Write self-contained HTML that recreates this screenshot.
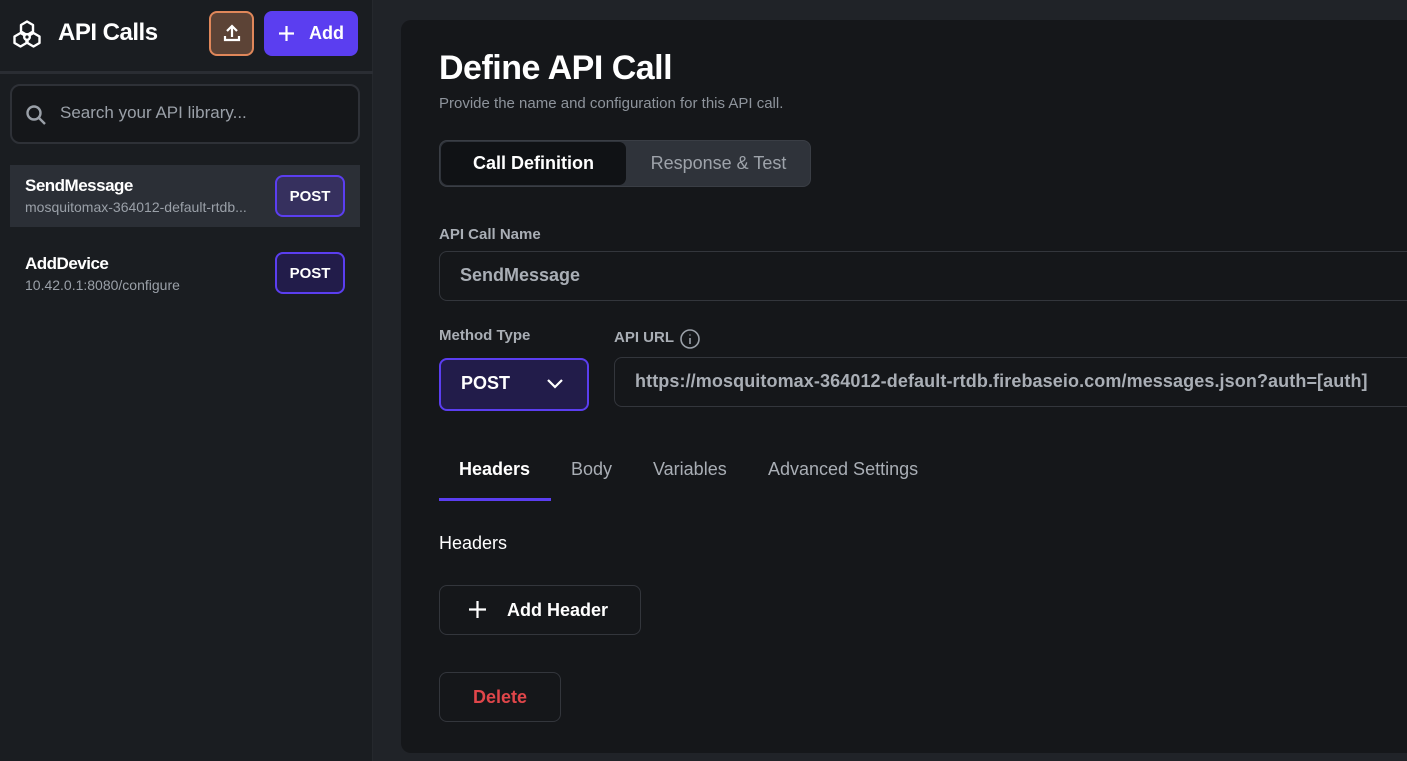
<!DOCTYPE html>
<html><head><meta charset="utf-8"><style>
*{margin:0;padding:0;box-sizing:border-box}
body{width:1407px;height:761px;overflow:hidden;background:#202328;font-family:"Liberation Sans",sans-serif;position:relative}
.a{position:absolute}
.side{left:0;top:0;width:373px;height:761px;background:#1a1d21;border-right:1px solid #25282d}
.panel{left:401px;top:20px;width:1020px;height:733px;background:#15171a;border-radius:10px}
.b{font-weight:bold}
.input{border:1px solid #33363c;border-radius:8px;background:#15171a}
</style></head><body>
<div class="a side">
  <svg class="a" style="left:11px;top:19px" width="32" height="32" viewBox="0 0 32 32" fill="none" stroke="#fff" stroke-width="2.4" stroke-linejoin="round">
    <path d="M16 2.5 L22 6 L22 12.5 L16 16 L10 12.5 L10 6 Z"/>
    <path d="M9.5 14 L15.5 17.5 L15.5 24 L9.5 27.5 L3.5 24 L3.5 17.5 Z"/>
    <path d="M22.5 14 L28.5 17.5 L28.5 24 L22.5 27.5 L16.5 24 L16.5 17.5 Z"/>
    <circle cx="16" cy="18" r="2.8" fill="#1a1d21"/>
  </svg>
  <div class="a b" style="left:58px;top:19px;font-size:24px;color:#fff;letter-spacing:-0.5px">API Calls</div>
  <div class="a" style="left:209px;top:11px;width:45px;height:45px;border:2px solid #e0875a;background:#5c4336;border-radius:8px">
    <svg class="a" style="left:11px;top:10px" width="20" height="20" viewBox="0 0 20 20" fill="none" stroke="#fff" stroke-width="2.2"><path d="M10 14V3M5 8l5-5 5 5M3 13v4h14v-4"/></svg>
  </div>
  <div class="a b" style="left:264px;top:11px;width:94px;height:45px;background:#5b3ef0;border-radius:8px;color:#fff;font-size:18px;line-height:45px">
    <svg class="a" style="left:13px;top:13px" width="19" height="19" viewBox="0 0 19 19" stroke="#fff" stroke-width="2.2"><path d="M9.5 2v15M2 9.5h15"/></svg>
    <span class="a" style="left:45px;top:0">Add</span></div>
  <div class="a" style="left:0;top:71px;width:373px;height:3px;background:#2a2d33"></div>
  <div class="a input" style="left:10px;top:84px;width:350px;height:60px;border-width:2px;border-color:#2e3137;border-radius:10px;background:#15171a">
    <svg class="a" style="left:12px;top:17px" width="24" height="24" viewBox="0 0 24 24" fill="none" stroke="#9aa0a8" stroke-width="2.4"><circle cx="10" cy="10" r="6.5"/><path d="M15 15l6 6"/></svg>
    <div class="a" style="left:48px;top:17px;font-size:17px;color:#9aa0a8">Search your API library...</div>
  </div>
  <div class="a" style="left:10px;top:165px;width:350px;height:62px;background:#2b2f36"></div>
  <div class="a b" style="left:25px;top:176px;font-size:17px;color:#fff;letter-spacing:-0.5px">SendMessage</div>
  <div class="a" style="left:25px;top:199px;font-size:14px;color:#9aa0a8">mosquitomax-364012-default-rtdb...</div>
  <div class="a b" style="left:275px;top:175px;width:70px;height:42px;border:2px solid #5b3ef0;background:#36305e;border-radius:8px;color:#fff;font-size:15px;text-align:center;line-height:40px">POST</div>
  <div class="a b" style="left:25px;top:254px;font-size:17px;color:#fff;letter-spacing:-0.5px">AddDevice</div>
  <div class="a" style="left:25px;top:277px;font-size:14px;color:#9aa0a8">10.42.0.1:8080/configure</div>
  <div class="a b" style="left:275px;top:252px;width:70px;height:42px;border:2px solid #5b3ef0;background:#221c4a;border-radius:8px;color:#fff;font-size:15px;text-align:center;line-height:40px">POST</div>
</div>
<div class="a panel"></div>
<div class="a b" style="left:439px;top:49px;font-size:34px;color:#fff;letter-spacing:-0.5px">Define API Call</div>
<div class="a" style="left:439px;top:95px;font-size:15px;color:#8e949c">Provide the name and configuration for this API call.</div>
<div class="a" style="left:439px;top:140px;width:372px;height:47px;background:#2f333a;border-radius:8px;border:1px solid #3a3e45"></div>
<div class="a b" style="left:441px;top:142px;width:185px;height:43px;background:#101215;border-radius:7px;color:#fff;font-size:18px;text-align:center;line-height:43px">Call Definition</div>
<div class="a" style="left:626px;top:142px;width:185px;height:43px;color:#9ea3aa;font-size:18px;text-align:center;line-height:43px">Response &amp; Test</div>
<div class="a b" style="left:439px;top:226px;font-size:15px;color:#a9aeb5">API Call Name</div>
<div class="a input" style="left:439px;top:251px;width:1000px;height:50px"></div>
<div class="a b" style="left:460px;top:265px;font-size:18px;color:#a9aeb5">SendMessage</div>
<div class="a b" style="left:439px;top:327px;font-size:15px;color:#a9aeb5">Method Type</div>
<div class="a b" style="left:614px;top:329px;font-size:15px;color:#a9aeb5">API URL</div>
<svg class="a" style="left:679px;top:328px" width="22" height="22" viewBox="0 0 22 22" fill="none" stroke="#9aa0a8" stroke-width="1.6"><circle cx="11" cy="11" r="9"/><path d="M11 10v6M11 6.5v1"/></svg>
<div class="a" style="left:439px;top:358px;width:150px;height:53px;border:2px solid #5b3ef0;background:#221c4a;border-radius:8px"></div>
<div class="a b" style="left:461px;top:373px;font-size:18px;color:#fff">POST</div>
<svg class="a" style="left:545px;top:376px" width="20" height="16" viewBox="0 0 20 16" fill="none" stroke="#fff" stroke-width="2.2"><path d="M3 4l7 7 7-7"/></svg>
<div class="a input" style="left:614px;top:357px;width:820px;height:50px"></div>
<div class="a b" style="left:635px;top:371px;font-size:18px;color:#a9aeb5;white-space:nowrap;letter-spacing:0.1px">https://mosquitomax-364012-default-rtdb.firebaseio.com/messages.json?auth=[auth]</div>
<div class="a b" style="left:459px;top:459px;font-size:18px;color:#fff">Headers</div>
<div class="a" style="left:571px;top:459px;font-size:18px;color:#a9aeb5">Body</div>
<div class="a" style="left:653px;top:459px;font-size:18px;color:#a9aeb5">Variables</div>
<div class="a" style="left:768px;top:459px;font-size:18px;color:#a9aeb5">Advanced Settings</div>
<div class="a" style="left:439px;top:498px;width:112px;height:3px;background:#5b3ef0"></div>
<div class="a" style="left:439px;top:533px;font-size:18px;color:#fff">Headers</div>
<div class="a input" style="left:439px;top:585px;width:202px;height:50px"></div>
<svg class="a" style="left:468px;top:600px" width="19" height="19" viewBox="0 0 19 19" stroke="#fff" stroke-width="2.2"><path d="M9.5 1v17M1 9.5h17"/></svg>
<div class="a b" style="left:507px;top:600px;font-size:18px;color:#fff">Add Header</div>
<div class="a input" style="left:439px;top:672px;width:122px;height:50px"></div>
<div class="a b" style="left:439px;top:687px;width:122px;text-align:center;font-size:18px;color:#e0464a">Delete</div>
</body></html>
